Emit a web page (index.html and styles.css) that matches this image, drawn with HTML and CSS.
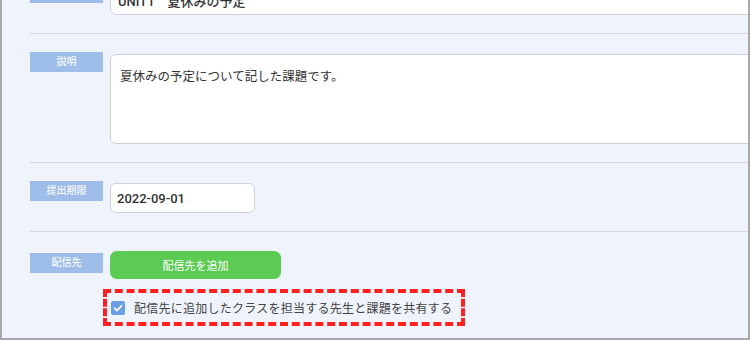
FILE: index.html
```html
<!DOCTYPE html>
<html lang="ja">
  <head>
    <title>課題の編集</title>
    <link rel="stylesheet" href="styles.css">
  </head>
  <body>
    <div class="frame">
      <div class="form">
        <div class="row">
          <span class="label"></span>
          <input class="field field-wide field-title" type="text" value="UNIT1　夏休みの予定">
        </div>
        <div class="row">
          <span class="label">説明</span>
          <textarea class="field field-wide field-desc">夏休みの予定について記した課題です。</textarea>
        </div>
        <div class="row">
          <span class="label">提出期限</span>
          <input class="field field-date" type="text" value="2022-09-01">
        </div>
        <div class="row row-dest">
          <div class="dest-head">
            <span class="label">配信先</span>
            <button type="button" class="btn-add">配信先を追加</button>
          </div>
          <div class="highlight">
            <span class="check">
              <svg width="10" height="10" viewBox="0 0 10 10">
                <path d="M1.5 5.2 L4 7.6 L8.6 2.6" fill="none" stroke="#fff" stroke-width="1.6" stroke-linecap="round" stroke-linejoin="round"/>
              </svg>
            </span>
            <span class="check-text">配信先に追加したクラスを担当する先生と課題を共有する</span>
          </div>
        </div>
      </div>
    </div>
  </body>
</html>
```

FILE: styles.css
```css
body {
    margin: 0;
    font-family: Roboto, "Noto Sans CJK JP", sans-serif;
    color: #333;
  }

  .frame {
    width: 750px;
    height: 340px;
    box-sizing: border-box;
    border: 2px solid #a9a9a9;
    border-top: none;
    background-color: #eff4fc;
    overflow: hidden;
  }

  .form {
    margin-top: -35px;
    padding-left: 28px;
  }

  .row {
    display: flex;
    align-items: flex-start;
    padding: 18px 0;
    border-top: 1px solid #d4d8de;
  }

  .row:first-child {
    border-top: none;
  }

  .label {
    flex: none;
    width: 73px;
    height: 20px;
    line-height: 20px;
    background-color: #9ebde9;
    color: #f4f8fe;
    font-size: 10px;
    font-weight: 500;
    text-align: center;
  }

  .field {
    flex: none;
    margin: 2px 0 0 7px;
    box-sizing: border-box;
    border: 1px solid #cfd3d9;
    border-radius: 6px;
    background-color: #fff;
    font-family: inherit;
    color: #333;
    outline: none;
  }

  .field-wide {
    width: 700px;
  }

  .field-title {
    height: 30px;
    padding: 0 7px;
    font-size: 13px;
    font-weight: 500;
  }

  .field-desc {
    height: 90px;
    padding: 13px 9px;
    font-size: 12.5px;
    line-height: 18px;
    resize: none;
  }

  .field-date {
    width: 145px;
    height: 30px;
    padding: 0 6px;
    font-size: 13px;
    font-weight: 500;
  }

  .row-dest {
    flex-direction: column;
    padding-top: 19px;
  }

  .dest-head {
    display: flex;
    align-items: flex-start;
  }

  .dest-head .label {
    margin-top: 2px;
  }

  .btn-add {
    width: 171px;
    height: 28px;
    margin-left: 7px;
    border: none;
    border-radius: 7px;
    background-color: #5ccb54;
    color: #fff;
    font-family: inherit;
    font-size: 11px;
    padding: 0;
  }

  .highlight {
    display: flex;
    align-items: center;
    box-sizing: border-box;
    width: 362px;
    height: 37px;
    margin: 10px 0 0 73px;
    padding: 0 4px;
    border: 4px dashed #ff1f1f;
  }

  .check {
    display: flex;
    align-items: center;
    justify-content: center;
    width: 14px;
    height: 14px;
    border-radius: 2px;
    background-color: #6b9de1;
  }

  .check-text {
    margin-left: 9px;
    font-size: 12px;
    letter-spacing: 0.25px;
    color: #444;
  }
```
